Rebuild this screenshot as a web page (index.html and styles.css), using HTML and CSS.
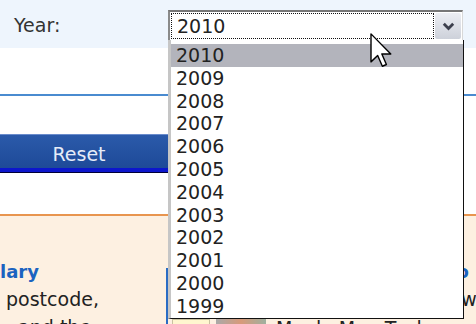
FILE: index.html
```html
<!DOCTYPE html>
<html lang="en">
<head>
  <meta charset="UTF-8">
  <title>Search</title>
  <link rel="stylesheet" href="styles.css">
</head>
<body>
  <div class="page">
    <div class="year-row">
      <label class="year-label" for="year">Year:</label>
      <div class="select" id="year">
        <div class="select-value">2010</div>
        <div class="select-arrow">
          <svg width="13" height="9" viewBox="0 0 13 9"><path d="M1.8 1.8 L6.5 6.5 L11.2 1.8" fill="none" stroke="#3c3f4c" stroke-width="2.8"/></svg>
        </div>
        <ul class="select-list">
          <li class="active">2010</li>
          <li>2009</li>
          <li>2008</li>
          <li>2007</li>
          <li>2006</li>
          <li>2005</li>
          <li>2004</li>
          <li>2003</li>
          <li>2002</li>
          <li>2001</li>
          <li>2000</li>
          <li>1999</li>
        </ul>
      </div>
    </div>

    <div class="actions">
      <button class="reset">Reset</button>
    </div>

    <div class="info">
      <div class="info-left">
        <h3>lary</h3>
        <p>&nbsp;postcode,<br>&nbsp;&nbsp;&nbsp;and the</p>
      </div>
      <div class="info-right">
        <h3>Suburb Property Info</h3>
        <p>Find parks, pools, oval and bowls</p>
        <div class="map-link">
          <span class="map-thumb"></span>
          <span class="map-icons"></span>
          <a href="#">Manly Map Tool</a>
        </div>
      </div>
    </div>

    <svg class="cursor" width="23" height="35" viewBox="0 0 13 20">
      <path d="M0.5 0.5 L0.5 16.5 L4.3 12.9 L7 19 L9.3 18 L6.7 12 L11.8 12 Z" fill="#fff" stroke="#000" stroke-width="0.8" stroke-linejoin="round"/>
    </svg>
  </div>
</body>
</html>
```

FILE: styles.css
```css
body {
  margin: 0;
  font-family: "DejaVu Sans", Verdana, sans-serif;
  font-size: 19px;
  color: #222;
  background: #fff;
}
.page {
  position: relative;
  width: 476px;
  height: 324px;
  overflow: hidden;
}

/* year row */
.year-row {
  display: flex;
  height: 48px;
  box-sizing: border-box;
  padding-top: 10px;
  background-color: #eef5fd;
}
.year-label {
  width: 154px;
  padding-left: 14px;
  line-height: 30px;
  color: #333;
}
.select {
  position: relative;
  display: flex;
  width: 295px;
  height: 30px;
  box-sizing: border-box;
  padding: 1px;
  background: #fff;
  border-top: 2px solid #777;
  border-left: 2px solid #8a8a8a;
  border-right: 1px solid #d8d8d8;
}
.select-value {
  flex: 1;
  border: 1px dotted #111;
  padding-left: 5px;
  line-height: 24px;
  color: #222;
}
.select-arrow {
  width: 26px;
  margin-left: 1px;
  display: flex;
  align-items: center;
  justify-content: center;
  background: linear-gradient(#eceef3, #cdd1da);
  border-radius: 2px;
}
.select-list {
  position: absolute;
  top: 28px;
  left: -2px;
  width: 296px;
  box-sizing: border-box;
  margin: 0;
  padding: 4px 0 0 0;
  list-style: none;
  background: #fff;
  border-left: 3px solid #c6c6c6;
  border-right: 1px solid #111;
  border-bottom: 1px solid #111;
  z-index: 2;
}
.select-list li {
  height: 22.8px;
  line-height: 22px;
  padding-left: 5px;
  color: #222;
}
.select-list li.active {
  background-color: #b3b4bc;
}

/* reset */
.actions {
  margin-top: 46px;
  border-top: 2px solid #4a8bd0;
  padding-top: 38px;
  padding-bottom: 41px;
  border-bottom: 2px solid #e8954f;
}
.reset {
  display: block;
  width: 190px;
  height: 39px;
  padding: 0 32px 0 0;
  margin: 0;
  font-family: inherit;
  font-size: 19px;
  color: #e6ecf8;
  border: 0;
  border-top: 1px solid #6a8ccc;
  border-bottom: 1px solid #000038;
  background: linear-gradient(#2b5aaa, #1c4896);
  box-shadow: inset 0 -4px 0 #0c16cc;
}

/* info panel */
.info {
  display: flex;
  background-color: #fdf0e1;
  height: 120px;
  padding-top: 43px;
  box-sizing: border-box;
}
.info h3 {
  margin: 0;
  font-size: 18px;
  line-height: 26px;
  color: #1b63c0;
}
.info p {
  margin: 0;
  line-height: 28px;
}
.info-left {
  width: 166px;
}
.info-right {
  flex: 1;
  margin-top: 9px;
  padding-left: 10px;
  border-left: 2px solid #2a6cc4;
  white-space: nowrap;
  overflow: hidden;
}
.info-right h3 {
  margin-top: -9px;
  text-align: right;
  padding-right: 7px;
}
.map-link {
  display: flex;
  align-items: flex-start;
  gap: 6px;
  margin-top: 6px;
  margin-left: -6px;
}
.map-thumb {
  width: 36px;
  height: 20px;
  background: #fff6cf;
  border: 1px solid #c9c2a0;
}
.map-icons {
  width: 50px;
  height: 20px;
  background: linear-gradient(90deg, #a9a9a9, #d89a7a, #9fb0a0);
}
.map-link a {
  color: #222;
  text-decoration: none;
  margin-left: 4px;
  line-height: 18px;
}

.cursor {
  position: absolute;
  left: 370px;
  top: 33px;
  z-index: 3;
}
```
